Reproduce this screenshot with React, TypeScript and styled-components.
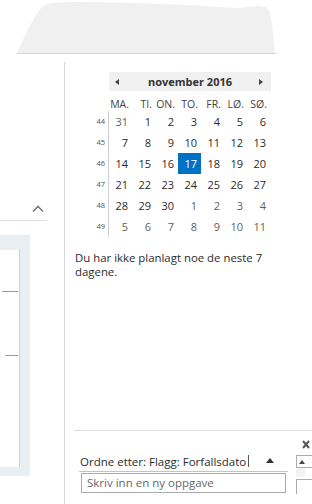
import React from 'react';
import styled, { createGlobalStyle } from 'styled-components';

const GlobalStyle = createGlobalStyle`
  html, body {
    margin: 0;
    padding: 0;
    background: #ffffff;
  }
  body {
    font-family: "Open Sans", "Noto Sans", "Liberation Sans", sans-serif;
    color: #333333;
  }
`;

type Day = { n: number; other?: boolean; selected?: boolean };
type Week = { no: number; days: Day[] };

const dayNames = ['MA.', 'TI.', 'ON.', 'TO.', 'FR.', 'LØ.', 'SØ.'];

const range = (from: number, to: number, other = false): Day[] => {
  const out: Day[] = [];
  for (let i = from; i <= to; i++) out.push({ n: i, other });
  return out;
};

const weeks: Week[] = [
  { no: 44, days: [{ n: 31, other: true }, ...range(1, 6)] },
  { no: 45, days: range(7, 13) },
  { no: 46, days: range(14, 20).map((d) => (d.n === 17 ? { ...d, selected: true } : d)) },
  { no: 47, days: range(21, 27) },
  { no: 48, days: [...range(28, 30), ...range(1, 4, true)] },
  { no: 49, days: range(5, 11, true) },
];

export default function App() {
  return (
    <>
      <GlobalStyle />
      <Page>
        <TopStrip>
          <svg width="312" height="62" viewBox="0 0 312 62">
            <path
              d="M17 53 C 22 42, 30 24, 38 12 C 42 6, 46 4, 52 3 L 70 2 C 130 2, 190 5, 236 8 L 258 6 L 266 7 L 269 10 L 271 18 L 273 32 L 275 53 Z"
              fill="#f0f0f0"
            />
            <line x1="17" y1="53.5" x2="276" y2="53.5" stroke="#d4d4d4" strokeWidth="1" />
          </svg>
        </TopStrip>
        <Body>
          <LeftPane>
            <CollapseRow>
              <svg width="12" height="9" viewBox="0 0 12 9">
                <path d="M1 7.5 L6 2.5 L11 7.5" fill="none" stroke="#7a7a7a" strokeWidth="1.6" />
              </svg>
            </CollapseRow>
            <SidePanel>
              <SidePanelInner>
                <Tick $left={2} />
                <Tick $left={5} $gap={63} />
              </SidePanelInner>
            </SidePanel>
          </LeftPane>
          <RightPane>
            <Calendar>
              <span />
              <MonthBar>
                <svg width="4" height="6" viewBox="0 0 4 6">
                  <path d="M4 0 L0 3 L4 6 Z" fill="#444" />
                </svg>
                <MonthTitle>november 2016</MonthTitle>
                <svg width="4" height="6" viewBox="0 0 4 6">
                  <path d="M0 0 L4 3 L0 6 Z" fill="#444" />
                </svg>
              </MonthBar>
              <span />
              {dayNames.map((d) => (
                <DayName key={d}>{d}</DayName>
              ))}
              {weeks.map((w) => (
                <React.Fragment key={w.no}>
                  <WeekNo>{w.no}</WeekNo>
                  {w.days.map((d, i) => (
                    <DayCell key={i} $other={d.other} $selected={d.selected}>
                      {d.n}
                    </DayCell>
                  ))}
                </React.Fragment>
              ))}
            </Calendar>
            <EmptyNote>Du har ikke planlagt noe de neste 7 dagene.</EmptyNote>
            <Spacer />
            <TaskArea>
              <TaskColumn>
                <SortRow>
                  <SortLabel>Ordne etter: Flagg: Forfallsdato</SortLabel>
                  <Caret />
                  <svg width="8" height="5" viewBox="0 0 8 5">
                    <path d="M0 5 L4 0 L8 5 Z" fill="#333" />
                  </svg>
                </SortRow>
                <NewTask>Skriv inn en ny oppgave</NewTask>
              </TaskColumn>
              <ScrollColumn>
                <svg width="8" height="9" viewBox="0 0 8 9">
                  <path d="M1 1 L7 8 M7 1 L1 8" stroke="#555" strokeWidth="2" />
                </svg>
                <ScrollButton>
                  <svg width="6" height="4" viewBox="0 0 6 4">
                    <path d="M0 4 L3 0 L6 4 Z" fill="#444" />
                  </svg>
                </ScrollButton>
                <ScrollTrack />
                <CheckBox />
              </ScrollColumn>
            </TaskArea>
          </RightPane>
        </Body>
      </Page>
    </>
  );
}

const Page = styled.div`
  width: 312px;
  height: 504px;
  overflow: hidden;
  display: flex;
  flex-direction: column;
`;

const TopStrip = styled.div`
  height: 62px;
  flex: none;
  svg {
    display: block;
  }
`;

const Body = styled.div`
  flex: 1;
  display: flex;
  min-height: 0;
`;

const LeftPane = styled.div`
  width: 64px;
  flex: none;
  border-right: 1px solid #d6d6d6;
  display: flex;
  flex-direction: column;
`;

const CollapseRow = styled.div`
  width: 47px;
  height: 159px;
  border-bottom: 1px solid #dedede;
  display: flex;
  align-items: flex-end;
  justify-content: flex-end;
  padding-right: 3px;
  box-sizing: border-box;
  padding-bottom: 7px;
`;

const SidePanel = styled.div`
  margin-top: 14px;
  width: 30px;
  height: 241px;
  background: #e9eef2;
  padding-top: 15px;
  box-sizing: border-box;
`;

const SidePanelInner = styled.div`
  width: 20px;
  height: 217px;
  background: #ffffff;
  border-right: 1px solid #c9d0e0;
  box-sizing: border-box;
  padding-top: 41px;
`;

const Tick = styled.div<{ $left: number; $gap?: number }>`
  height: 1px;
  background: #9a9a9a;
  margin-left: ${(p) => p.$left}px;
  margin-right: 1px;
  margin-top: ${(p) => p.$gap ?? 0}px;
`;

const RightPane = styled.div`
  flex: 1;
  display: flex;
  flex-direction: column;
  min-width: 0;
`;

const Calendar = styled.div`
  margin-top: 10px;
  margin-left: 25px;
  display: grid;
  grid-template-columns: 19px repeat(7, 23px);
  grid-template-rows: 19px 20px repeat(6, 21px);
  width: max-content;
`;

const MonthBar = styled.div`
  grid-column: 2 / span 7;
  background: #f0f0f0;
  margin-right: -1px;
  height: 19px;
  display: flex;
  align-items: center;
  justify-content: space-between;
  padding: 0 8px 0 6px;
  box-sizing: border-box;
  svg {
    display: block;
  }
`;

const MonthTitle = styled.span`
  font-size: 11px;
  font-weight: 700;
  color: #333;
  margin-left: 2px;
`;

const DayName = styled.div`
  font-size: 10.5px;
  color: #444;
  text-align: right;
  padding-right: 3px;
  line-height: 20px;
  margin-top: 3px;
  white-space: nowrap;
`;

const WeekNo = styled.div`
  font-size: 7.5px;
  color: #555;
  border-right: 1px solid #cfcfcf;
  text-align: right;
  padding-right: 3px;
  line-height: 21px;
`;

const DayCell = styled.div<{ $other?: boolean; $selected?: boolean }>`
  font-size: 11px;
  line-height: 21px;
  text-align: right;
  padding-right: 4px;
  color: ${(p) => (p.$selected ? '#ffffff' : p.$other ? '#5f5f5f' : '#2b2b2b')};
  background: ${(p) => (p.$selected ? '#0072c6' : 'transparent')};
`;

const EmptyNote = styled.p`
  margin: 14px 0 0 10px;
  width: 200px;
  font-size: 11.4px;
  line-height: 14px;
  color: #2b2b2b;
`;

const Spacer = styled.div`
  flex: 1;
`;

const TaskArea = styled.div`
  height: 73px;
  flex: none;
  margin-left: 9px;
  border-top: 1px solid #dcdcdc;
  display: flex;
  padding-left: 5px;
`;

const TaskColumn = styled.div`
  width: 209px;
  padding-top: 20px;
`;

const SortRow = styled.div`
  height: 20px;
  border-bottom: 1px solid #c4c4c4;
  display: flex;
  align-items: center;
  padding-left: 1px;
  svg {
    display: block;
    margin-left: 17px;
    margin-top: -2px;
  }
`;

const SortLabel = styled.span`
  font-size: 11.5px;
  color: #2b2b2b;
  white-space: nowrap;
`;

const Caret = styled.span`
  width: 1px;
  height: 12px;
  background: #555;
  margin-left: 2px;
`;

const NewTask = styled.div`
  margin: 1px 0 0 2px;
  width: 205px;
  height: 20px;
  border: 1px solid #ababab;
  box-sizing: border-box;
  font-size: 11.5px;
  line-height: 18px;
  color: #666;
  padding-left: 5px;
`;

const ScrollColumn = styled.div`
  margin-left: 8px;
  flex: 1;
  display: flex;
  flex-direction: column;
  padding-top: 9px;
  > svg {
    margin-left: 6px;
    display: block;
  }
`;

const ScrollButton = styled.div`
  margin-top: 6px;
  height: 13px;
  border: 1px solid #ababab;
  border-right: none;
  box-sizing: border-box;
  display: flex;
  align-items: center;
  padding-left: 2px;
  svg {
    display: block;
  }
`;

const ScrollTrack = styled.div`
  width: 9px;
  height: 9px;
  background: #f3f3f3;
`;

const CheckBox = styled.div`
  margin-top: 2px;
  height: 14px;
  border-left: 1px solid #ababab;
  border-top: 1px solid #ababab;
`;
